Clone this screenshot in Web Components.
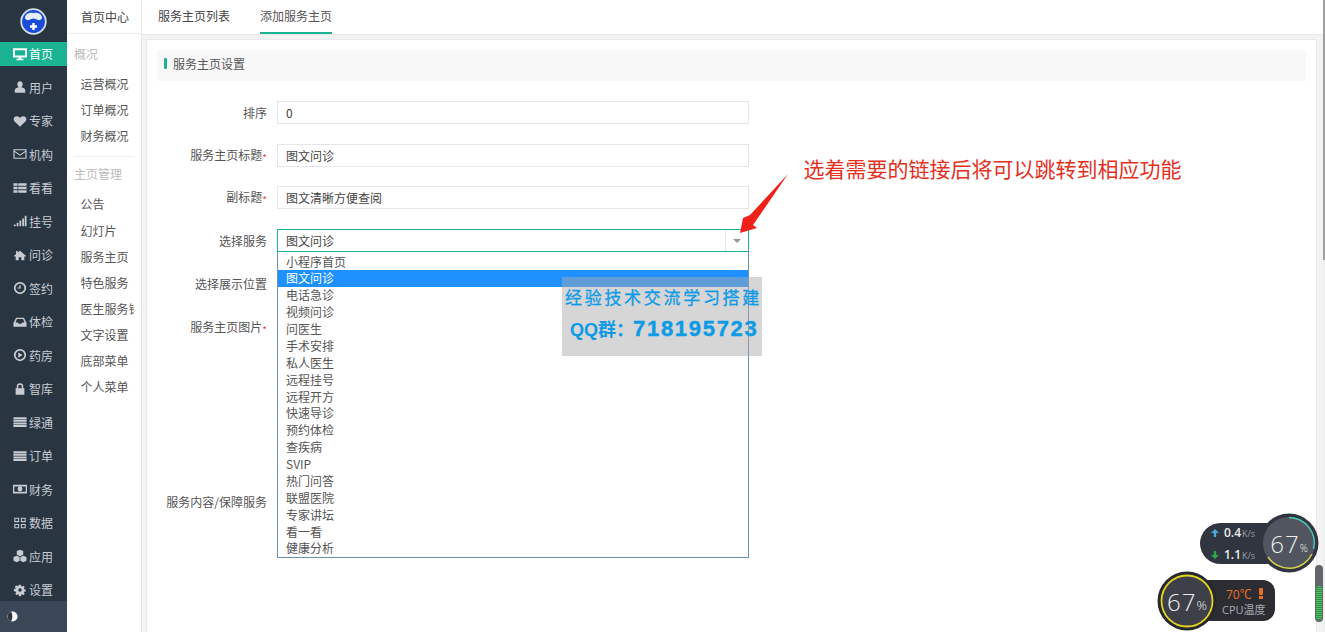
<!DOCTYPE html>
<html lang="zh">
<head>
<meta charset="utf-8">
<title>服务主页设置</title>
<style>
  html, body { margin: 0; height: 100%; overflow: hidden; }
  body {
    font: 12px "Noto Sans CJK SC", "Liberation Sans", sans-serif;
    color: #555;
    background: #f3f3f3;
  }
</style>
</head>
<body>
<app-shell></app-shell>

<script>
const ICONS = {
  monitor: '<path d="M0 1.500h16v10.500H9.500v1.500H12V15H4v-1.500h2.500V12H0zM2.200 3.700v6h11.600v-6z" fill-rule="evenodd"/>',
  user: '<path d="M8 1.500a3 3 0 0 1 3 3.500c0 1.500-.8 2.700-1.500 3.200 2.500.5 4.500 1.500 4.500 3.500v2.800H2v-2.800c0-2 2-3 4.500-3.500C5.800 7.700 5 6.500 5 5a3 3 0 0 1 3-3.500z"/>',
  heart: '<path d="M8 14.500 1.800 8.500C-.2 6.300.8 2.500 4.300 2.500 6 2.500 7.300 3.500 8 4.500c.7-1 2-2 3.700-2 3.500 0 4.500 3.800 2.500 6z"/>',
  mail: '<path d="M.5 2.500h15v11H.5zM1.800 5.800v6.400h12.400V5.800L8 10zM1.800 3.800v.4L8 8.500l6.200-4.300v-.4z" fill-rule="evenodd"/>',
  table: '<path d="M.5 2.500h4.700v3H.5zM6 2.500h9.500v3H6zM.5 6.500h4.700v3H.5zM6 6.500h9.500v3H6zM.5 10.500h4.700v3H.5zM6 10.500h9.500v3H6z"/>',
  signal: '<path d="M1 12h2v2H1zM4.200 10h2v4h-2zM7.400 7.500h2V14h-2zM10.600 5h2v9h-2zM13.400 2H15.500v12h-2.100z"/>',
  home: '<path d="M8 3l7 6-1 1-1-.8V14H9.500v-3.500h-3V14H3V9.200L2 10 1 9l2.500-2.100V3.500h2v1.700z"/>',
  clock: '<path d="M8 1a7 7 0 1 1 0 14A7 7 0 0 1 8 1zM8 3a5 5 0 1 0 0 10A5 5 0 0 0 8 3zM7.300 4.800h1.500v3.900H5.200V7.300h2.100z" fill-rule="evenodd"/>',
  inbox: '<path d="M3.500 3h9L15.500 9v4.500h-15V9zM4.500 4.500 2.800 8.500H5.500L6.500 10h3l1-1.500h2.700l-1.700-4z" fill-rule="evenodd"/>',
  play: '<path d="M8 1a7 7 0 1 1 0 14A7 7 0 0 1 8 1zM8 3a5 5 0 1 0 0 10A5 5 0 0 0 8 3zM6 5l5 3-5 3z" fill-rule="evenodd"/>',
  lock: '<path d="M8 1.500a3.700 3.700 0 0 1 3.700 3.700V7H13v7.500H3V7h1.300V5.200A3.700 3.700 0 0 1 8 1.500zM8 3.200a2 2 0 0 0-2 2V7h4V5.200a2 2 0 0 0-2-2z" fill-rule="evenodd"/>',
  list: '<path d="M.5 2.500h15v2.300H.5zM.5 5.500h15v2.300H.5zM.5 8.500h15v2.300H.5zM.5 11.500h15v2.300H.5z"/>',
  money: '<path d="M0 3h16v10H0zM1.500 5v6h13V5zM8 5.200a2.800 2.800 0 1 1 0 5.600 2.800 2.800 0 0 1 0-5.600z" fill-rule="evenodd"/>',
  grid: '<path d="M1.500 2H7v5H1.500zM2.700 3.200v2.600h3.100V3.200zM9 2h5.500v5H9zM10.200 3.200v2.600h3.100V3.200zM1.500 9H7v5H1.500zM2.700 10.200v2.600h3.100v-2.600zM9 9h5.500v5H9zM10.200 10.200v2.600h3.100v-2.600z" fill-rule="evenodd"/>',
  cubes: '<path d="M8 .8l3.700 1.500V6.700L8 8.300 4.300 6.700V2.300zM4.200 7.600l3.400 1.400v4.300L4.200 15 .6 13.300V9zM11.800 7.600 15.400 9v4.300L11.800 15l-3.400-1.700V9z"/>',
  gear: '<path d="M6.900 2h2.200l.3 1.700 1 .4 1.400-1 1.600 1.600-1 1.400.4 1 1.700.3v2.200l-1.700.3-.4 1 1 1.400-1.600 1.600-1.400-1-1 .4-.3 1.700H6.900l-.3-1.700-1-.4-1.400 1-1.600-1.600 1-1.400-.4-1L1 9.100V6.900l1.700-.3.400-1-1-1.400 1.600-1.600 1.400 1 1-.4zM8 6a2 2 0 1 0 0 4 2 2 0 0 0 0-4z" fill-rule="evenodd"/>'
};

const NAV = [
  ['monitor', '首页', true], ['user', '用户'], ['heart', '专家'], ['mail', '机构'], ['table', '看看'],
  ['signal', '挂号'], ['home', '问诊'], ['clock', '签约'], ['inbox', '体检'], ['play', '药房'],
  ['lock', '智库'], ['list', '绿通'], ['list', '订单'], ['money', '财务'], ['grid', '数据'],
  ['cubes', '应用'], ['gear', '设置']
];

class NavItem extends HTMLElement {
  constructor() {
    super();
    const icon = ICONS[this.getAttribute('icon')];
    this.attachShadow({ mode: 'open' }).innerHTML = `
      <style>
        :host {
          display: flex; align-items: center; flex: none; box-sizing: border-box;
          height: 24px; padding: 0 0 1px 13px; gap: 2px;
          color: #c6ccd2; font-size: 12px;
        }
        :host([active]) { background: #1ab394; color: #fff; }
        svg { width: 14px; height: 14px; fill: currentColor; flex: none; }
      </style>
      <svg viewBox="0 0 16 16">${icon}</svg><slot></slot>`;
  }
}
customElements.define('nav-item', NavItem);

class MainSidebar extends HTMLElement {
  constructor() {
    super();
    const items = NAV.map(([icon, label, active]) =>
      `<nav-item icon="${icon}"${active ? ' active' : ''}>${label}</nav-item>`).join('');
    this.attachShadow({ mode: 'open' }).innerHTML = `
      <style>
        :host {
          display: flex; flex-direction: column; flex: none;
          width: 67px; height: 100%; background: #2a3542;
        }
        .logo { height: 42px; display: flex; justify-content: center; align-items: center; flex: none; }
        .list { display: flex; flex-direction: column; gap: 9.500px; flex: 1; min-height: 0; }
        .foot { height: 31px; flex: none; background: #3a4757; display: flex; align-items: center; padding-left: 7px; }
      </style>
      <div class="logo">
        <svg width="27" height="27" viewBox="0 0 27 27">
          <circle cx="13.500" cy="13.500" r="12.300" fill="#1a4cdc" stroke="#d5deea" stroke-width="1.800"/>
          <path d="M5 9c1.500-4 5.500-5 8.500-3.800C16.500 4 20.500 5 22 9c.3 2.500-2 3.500-4 3-2-.3-2.700-1.400-4.500-1.400S11 11.700 9 12c-2 .5-4.300-.5-4-3z" fill="#e8eef8"/>
          <path d="M12.300 15h2.400v2.300H17v2.400h-2.300V22h-2.400v-2.300H10v-2.400h2.300z" fill="#fff"/>
        </svg>
      </div>
      <div class="list">${items}</div>
      <div class="foot">
        <svg width="11" height="11" viewBox="0 0 11 11"><circle cx="5.500" cy="5.500" r="5" fill="#fff"/><path d="M4 .8a5 5 0 0 0 0 9.400C5.800 8 5.800 3 4 .8z" fill="#2a3542"/></svg>
      </div>`;
  }
}
customElements.define('main-sidebar', MainSidebar);

class SubSidebar extends HTMLElement {
  constructor() {
    super();
    this.attachShadow({ mode: 'open' }).innerHTML = `
      <style>
        :host {
          display: block; flex: none; width: 74px; height: 100%;
          background: #fff; border-right: 1px solid #e7e7e7; font-size: 12px; color: #555;
        }
        .head { height: 33px; line-height: 33px; padding-left: 14px; border-bottom: 1px solid #eee; color: #444; }
        .group { height: 18px; line-height: 18px; padding-left: 7px; color: #bbb; }
        .first { margin-top: 11px; margin-bottom: 8px; }
        .link { height: 26.150px; line-height: 26.150px; padding-left: 13.500px; width: 53.500px; overflow: hidden; white-space: nowrap; }
        hr { border: 0; border-top: 1px solid #eee; margin: 7px 7px 8px; }
        .second { margin-bottom: 8px; }
      </style>
      <div class="head">首页中心</div>
      <div class="group first">概况</div>
      <div class="link">运营概况</div>
      <div class="link">订单概况</div>
      <div class="link">财务概况</div>
      <hr>
      <div class="group second">主页管理</div>
      <div class="link">公告</div>
      <div class="link">幻灯片</div>
      <div class="link">服务主页</div>
      <div class="link">特色服务</div>
      <div class="link">医生服务销售</div>
      <div class="link">文字设置</div>
      <div class="link">底部菜单</div>
      <div class="link">个人菜单</div>`;
  }
}
customElements.define('sub-sidebar', SubSidebar);

class TabBar extends HTMLElement {
  constructor() {
    super();
    this.attachShadow({ mode: 'open' }).innerHTML = `
      <style>
        :host {
          display: flex; flex: none; height: 34px; gap: 30px; padding-left: 16px;
          background: #fff; border-bottom: 1px solid #e7e7e7; font-size: 12px; color: #444;
        }
        div { line-height: 32px; height: 32px; }
        .on { color: #555; border-bottom: 2px solid #1ab394; }
      </style>
      <div>服务主页列表</div>
      <div class="on">添加服务主页</div>`;
  }
}
customElements.define('tab-bar', TabBar);

class FormRow extends HTMLElement {
  constructor() {
    super();
    const req = this.hasAttribute('required') ? '<i>*</i>' : '';
    this.attachShadow({ mode: 'open' }).innerHTML = `
      <style>
        :host { display: flex; align-items: center; gap: 10px; font-size: 12px; color: #555; min-height: 22px; }
        label { width: 120px; text-align: right; flex: none; white-space: nowrap; }
        i { color: #e44; font-style: normal; font-size: 10px; vertical-align: -2px; }
        .box {
          height: 21px; line-height: 21px; padding-left: 8px;
          width: 462px; border: 1px solid #e5e6e7; color: #444; background: #fff; position: relative;
        }
        :host([focus]) .box { border-color: #1ab394; }
        :host([bare]) .box { border-color: transparent; background: none; }
      </style>
      <label>${this.getAttribute('label')}${req}</label>
      <div class="box"><slot></slot></div>`;
  }
}
customElements.define('form-row', FormRow);

class SelectCaret extends HTMLElement {
  constructor() {
    super();
    this.attachShadow({ mode: 'open' }).innerHTML = `
      <style>
        :host {
          position: absolute; right: 0; top: 0; bottom: 0; width: 22px;
          border-left: 1px solid #e5e6e7; display: flex; align-items: center; justify-content: center;
        }
        b { width: 0; height: 0; border: 4px solid transparent; border-top: 4px solid #999; border-bottom: 0; }
      </style>
      <b></b>`;
  }
}
customElements.define('select-caret', SelectCaret);

class ServiceDropdown extends HTMLElement {
  constructor() {
    super();
    const names = ['小程序首页','图文问诊','电话急诊','视频问诊','问医生','手术安排','私人医生','远程挂号','远程开方','快速导诊','预约体检','查疾病','SVIP','热门问答','联盟医院','专家讲坛','看一看','健康分析'];
    const rows = names.map((n, i) => `<div class="${i == 1 ? 'sel' : ''}">${n}</div>`).join('');
    this.attachShadow({ mode: 'open' }).innerHTML = `
      <style>
        :host {
          position: absolute; left: 277px; top: 252px; width: 470px; z-index: 2;
          background: #fff; border: 1px solid #6d8fb3; border-top: 0; padding-top: 1.500px;
          font-size: 12px; color: #555;
        }
        div { height: 16.880px; line-height: 16.880px; padding-left: 8px; white-space: nowrap; }
        .sel { background: #1e90ff; color: #fff; }
      </style>
      ${rows}`;
  }
}
customElements.define('service-dropdown', ServiceDropdown);

class SettingsCard extends HTMLElement {
  constructor() {
    super();
    this.attachShadow({ mode: 'open' }).innerHTML = `
      <style>
        :host {
          display: block; margin: 5px 9px 0 5px; padding: 10px 10px 0 10px; background: #fff;
          height: 620px; box-sizing: border-box; box-shadow: 0 0 0 1px #e9e9e9;
        }
        .title {
          height: 31px; box-sizing: border-box; background: #f8f8f8; display: flex; align-items: center; gap: 6px;
          padding: 0 0 5px 7px; font-size: 12px; color: #555;
        }
        .title b { width: 3px; height: 11px; background: #1ab394; border-radius: 1px; }
        .form { display: flex; flex-direction: column; gap: 19.700px; margin: 20px 0 0 -10px; }
        .pic { margin-top: 2px; }
        .tall { margin-top: 131px; }
      </style>
      <div class="title"><b></b>服务主页设置</div>
      <div class="form">
        <form-row label="排序">0</form-row>
        <form-row label="服务主页标题" required>图文问诊</form-row>
        <form-row label="副标题" required>图文清晰方便查阅</form-row>
        <form-row label="选择服务" focus>图文问诊<select-caret></select-caret></form-row>
        <form-row label="选择展示位置" bare></form-row>
        <form-row class="pic" label="服务主页图片" required bare></form-row>
        <form-row class="tall" label="服务内容/保障服务" bare></form-row>
      </div>`;
  }
}
customElements.define('settings-card', SettingsCard);

class WaterMark extends HTMLElement {
  constructor() {
    super();
    this.attachShadow({ mode: 'open' }).innerHTML = `
      <style>
        :host {
          position: absolute; left: 562px; top: 277px; width: 200px; height: 79px; z-index: 3;
          background: rgba(170,170,170,.48); color: #0d9ae6;
          display: flex; flex-direction: column; align-items: flex-start;
        }
        .a { font: 400 17px/20px "Noto Sans CJK SC", sans-serif; letter-spacing: 2.700px; white-space: nowrap; margin: 10px 0 0 3px; -webkit-text-stroke: .3px #0d9ae6; }
        .b { font: 700 22px/24px "Liberation Sans", "Noto Sans CJK SC", sans-serif; letter-spacing: 1.700px; white-space: nowrap; margin: 10px 0 0 8px; -webkit-text-stroke: .4px #0d9ae6; }
        .b span { font-size: 18px; letter-spacing: 0; -webkit-text-stroke: 0; margin-right: -1px; }
      </style>
      <div class="a">经验技术交流学习搭建</div>
      <div class="b"><span>QQ群：</span>718195723</div>`;
  }
}
customElements.define('water-mark', WaterMark);

class RedNote extends HTMLElement {
  constructor() {
    super();
    this.attachShadow({ mode: 'open' }).innerHTML = `
      <style>
        :host { position: absolute; left: 740px; top: 153px; z-index: 4; width: 450px; height: 85px; pointer-events: none; }
        div { position: absolute; left: 63.500px; top: 0; font: 21px/30px "Noto Sans CJK SC", sans-serif; color: #e5301f; white-space: nowrap; }
        svg { position: absolute; left: 0; top: 17px; }
      </style>
      <div>选着需要的链接后将可以跳转到相应功能</div>
      <svg width="50" height="65" viewBox="0 0 50 65"><path d="M48 4 10 45 3 48 0 63 17 58 13 55z" fill="#f0201a"/></svg>`;
  }
}
customElements.define('red-note', RedNote);

class NetGauge extends HTMLElement {
  constructor() {
    super();
    this.attachShadow({ mode: 'open' }).innerHTML = `
      <style>
        :host { position: absolute; left: 1200px; top: 513px; width: 120px; height: 60px; z-index: 5; font-family: "Open Sans", "Noto Sans CJK SC", sans-serif; }
        .pill { position: absolute; left: 0; top: 10px; width: 90px; height: 41px; border-radius: 21px; background: #30353f; color: #eee; font-size: 12px; font-weight: 600; }
        .line { position: absolute; left: 24px; white-space: nowrap; line-height: 16px; }
        .line small { font-size: 9px; font-weight: 400; color: #9aa0a8; margin-left: 1px; }
        .l1 { top: 2px; } .l2 { top: 24px; }
        .gauge { position: absolute; left: 59px; top: 0; }
        .arr { position: absolute; left: 11px; fill: currentColor; }
        .num { position: absolute; left: 59px; top: 0; width: 60px; height: 60px; display: flex; align-items: center; justify-content: center; color: #eee; font-size: 24px; font-weight: 300; letter-spacing: 1px; }
        .num small { font-size: 10px; margin: 9px 0 0 0; letter-spacing: 0; }
      </style>
      <div class="pill">
        <svg class="arr" width="8" height="8" viewBox="0 0 8 8" style="top:6px;color:#49a9d9"><path d="M4 0l4 4H5.200v4H2.800V4H0z"/></svg>
        <div class="line l1">0.4<small>K/s</small></div>
        <svg class="arr" width="8" height="8" viewBox="0 0 8 8" style="top:28px;color:#2aa84a"><path d="M4 8 0 4h2.800V0h2.400v4H8z"/></svg>
        <div class="line l2">1.1<small>K/s</small></div>
      </div>
      <svg class="gauge" width="60" height="60" viewBox="0 0 60 60">
        <circle cx="30" cy="30" r="29.500" fill="#30353f"/>
        <circle cx="30" cy="30" r="26" fill="#50555f"/>
        <path d="M30 4.500A25.500 25.500 0 0 1 54.500 36" fill="none" stroke="#4cc6b8" stroke-width="1.500"/>
        <path d="M53 41A25.500 25.500 0 0 1 9 44" fill="none" stroke="#d6d14a" stroke-width="1.500"/>
      </svg>
      <div class="num">67<small>%</small></div>`;
  }
}
customElements.define('net-gauge', NetGauge);

class CpuGauge extends HTMLElement {
  constructor() {
    super();
    this.attachShadow({ mode: 'open' }).innerHTML = `
      <style>
        :host { position: absolute; left: 1157px; top: 571px; width: 120px; height: 60px; z-index: 5; font-family: "Open Sans", "Noto Sans CJK SC", sans-serif; }
        .pill { position: absolute; left: 40px; top: 9px; width: 78px; height: 41px; border-radius: 0 12px 12px 0; background: #2b2d33; }
        .t { position: absolute; left: 29px; top: 5px; font-size: 12px; color: #e8701e; white-space: nowrap; }
        .w { position: absolute; left: 62px; top: 8px; width: 4px; height: 7px; background: #e8701e; border-radius: 1px; }
        .d { position: absolute; left: 62px; top: 16px; width: 4px; height: 3px; background: #e8701e; }
        .c { position: absolute; left: 25px; top: 21px; font-size: 11px; line-height: 17px; color: #a8abb0; white-space: nowrap; }
        svg { position: absolute; left: 0; top: 0; }
        .num { position: absolute; left: 0; top: 0; width: 60px; height: 60px; display: flex; align-items: center; justify-content: center; color: #eee; font-size: 24px; font-weight: 300; letter-spacing: 1px; }
        .num small { font-size: 13px; margin: 7px 0 0 0; letter-spacing: 0; }
      </style>
      <div class="pill">
        <div class="t">70℃</div><div class="w"></div><div class="d"></div>
        <div class="c">CPU温度</div>
      </div>
      <svg width="60" height="60" viewBox="0 0 60 60">
        <circle cx="30" cy="30" r="29.500" fill="#26282e"/>
        <circle cx="30" cy="30" r="25.500" fill="#3d4049" stroke="#e2d41f" stroke-width="1.800"/>
      </svg>
      <div class="num">67<small>%</small></div>`;
  }
}
customElements.define('cpu-gauge', CpuGauge);

class ScrollRail extends HTMLElement {
  constructor() {
    super();
    this.attachShadow({ mode: 'open' }).innerHTML = `
      <style>
        :host { position: absolute; right: 0; top: 0; bottom: 0; width: 10px; z-index: 1; }
        .track { position: absolute; right: 0; top: 0; bottom: 0; width: 2px; background: #eee; }
        .track b { display: block; height: 260px; background: #a0a0a0; }
        .thumb { position: absolute; left: 0; top: 565px; width: 8px; height: 57px; border-radius: 4px; background: #62666b; z-index: 6; }
        .bars { position: absolute; left: 1px; right: 1px; top: 21px; height: 34px; background: repeating-linear-gradient(#54c468 0 1px, #2f8a42 1px 2px); border-radius: 3px; }
      </style>
      <div class="track"><b></b></div>
      <div class="thumb"><div class="bars"></div></div>`;
  }
}
customElements.define('scroll-rail', ScrollRail);

class AppShell extends HTMLElement {
  constructor() {
    super();
    this.attachShadow({ mode: 'open' }).innerHTML = `
      <style>
        :host { display: flex; position: relative; width: 1325px; height: 632px; overflow: hidden; }
        main { flex: 1; min-width: 0; display: flex; flex-direction: column; height: 100%; }
      </style>
      <main-sidebar></main-sidebar>
      <sub-sidebar></sub-sidebar>
      <main>
        <tab-bar></tab-bar>
        <settings-card></settings-card>
      </main>
      <service-dropdown></service-dropdown>
      <water-mark></water-mark>
      <red-note></red-note>
      <scroll-rail></scroll-rail>
      <net-gauge></net-gauge>
      <cpu-gauge></cpu-gauge>`;
  }
}
customElements.define('app-shell', AppShell);
</script>
</body>
</html>
